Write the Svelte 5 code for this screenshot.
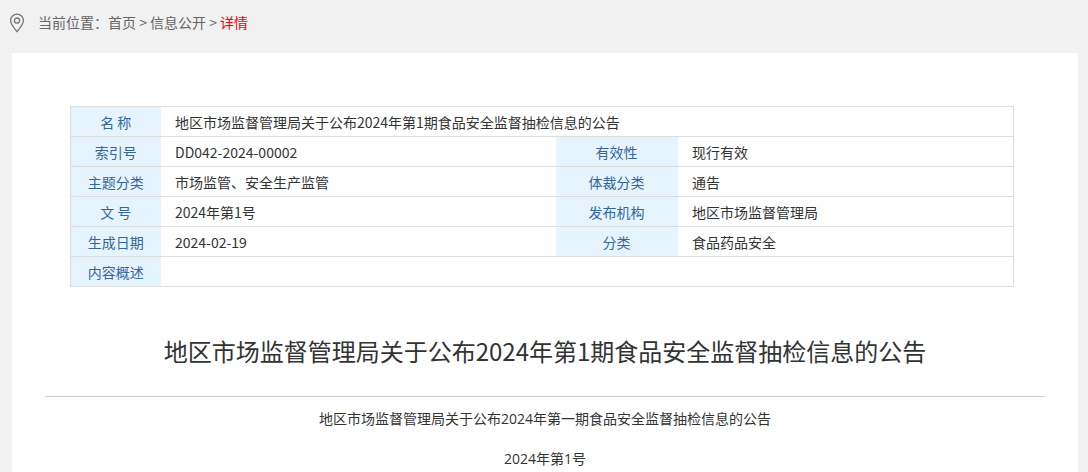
<script>
  const rows = [
    ['索引号', 'DD042-2024-00002', '有效性', '现行有效'],
    ['主题分类', '市场监管、安全生产监管', '体裁分类', '通告'],
    ['文 号', '2024年第1号', '发布机构', '地区市场监督管理局'],
    ['生成日期', '2024-02-19', '分类', '食品药品安全']
  ];
  const title = '地区市场监督管理局关于公布2024年第1期食品安全监督抽检信息的公告';
</script>

<div class="page">
  <nav class="crumb">
    <svg class="pin" width="16" height="20" viewBox="0 0 16 20" fill="none" stroke="#777" stroke-width="1.3">
      <path d="M8 18.6C5.6 15.6 1.6 11.6 1.6 7.6a6.4 6.4 0 0 1 12.8 0c0 4-4 8-6.4 11z" />
      <circle cx="8" cy="7.6" r="2.6" />
    </svg>
    <span>当前位置：首页 &gt; 信息公开 &gt; <em>详情</em></span>
  </nav>

  <main class="card">
    <table>
      <colgroup><col class="c1" /><col class="c2" /><col class="c3" /><col /></colgroup>
      <tbody>
        <tr><th>名 称</th><td colspan="3">{title}</td></tr>
        {#each rows as r}
          <tr><th>{r[0]}</th><td>{r[1]}</td><th>{r[2]}</th><td>{r[3]}</td></tr>
        {/each}
        <tr><th>内容概述</th><td colspan="3"></td></tr>
      </tbody>
    </table>

    <h1>{title}</h1>
    <hr />
    <p class="sub">地区市场监督管理局关于公布2024年第一期食品安全监督抽检信息的公告</p>
    <p class="num">2024年第1号</p>
  </main>
</div>

<style>
  :global(body) {
    margin: 0;
    background: #f1f1f1;
    font-family: "Noto Sans CJK SC", "Noto Sans", sans-serif;
    overflow: hidden;
  }
  .page {
    display: flex;
    flex-direction: column;
    height: 472px;
    overflow: hidden;
  }
  .crumb {
    display: flex;
    align-items: center;
    flex: none;
    height: 53px;
    box-sizing: border-box;
    padding: 0 0 10px 9px;
    font-size: 14px;
    color: #666;
  }
  .pin {
    margin-right: 13px;
    margin-top: 2px;
  }
  em {
    font-style: normal;
    color: #f00;
  }
  .card {
    flex: 1;
    margin: 0 10px 0 12px;
    background: #fff;
    padding: 53px 33px 0;
    color: #333;
  }
  table {
    width: 944px;
    margin: 0 0 0 25px;
    border-collapse: collapse;
    table-layout: fixed;
    font-size: 14px;
  }
  .c1 { width: 90px; }
  .c2 { width: 395px; }
  .c3 { width: 122px; }
  tr { height: 30px; }
  th, td {
    border-top: 1px solid #ddd;
    border-bottom: 1px solid #ddd;
    padding: 0;
    line-height: 20px;
    box-sizing: border-box;
  }
  th {
    background: #e6f4ff;
    font-weight: 400;
    color: #336699;
    text-align: center;
  }
  th:first-child { border-left: 1px solid #ddd; }
  td { padding-left: 14.5px; }
  td:last-child { border-right: 1px solid #ddd; }
  h1 {
    margin: 42px 0 0;
    font-size: 24px;
    font-weight: 400;
    line-height: 44px;
    text-align: center;
    color: #333;
  }
  hr {
    border: 0;
    border-top: 1px solid #ccc;
    margin: 23px 0 0;
  }
  p {
    margin: 0;
    font-family: "Open Sans", "Noto Sans CJK SC", sans-serif;
    font-size: 14px;
    line-height: 20px;
    text-align: center;
    color: #333;
  }
  .sub { margin-top: 12px; }
  .num { margin-top: 20px; }
</style>
